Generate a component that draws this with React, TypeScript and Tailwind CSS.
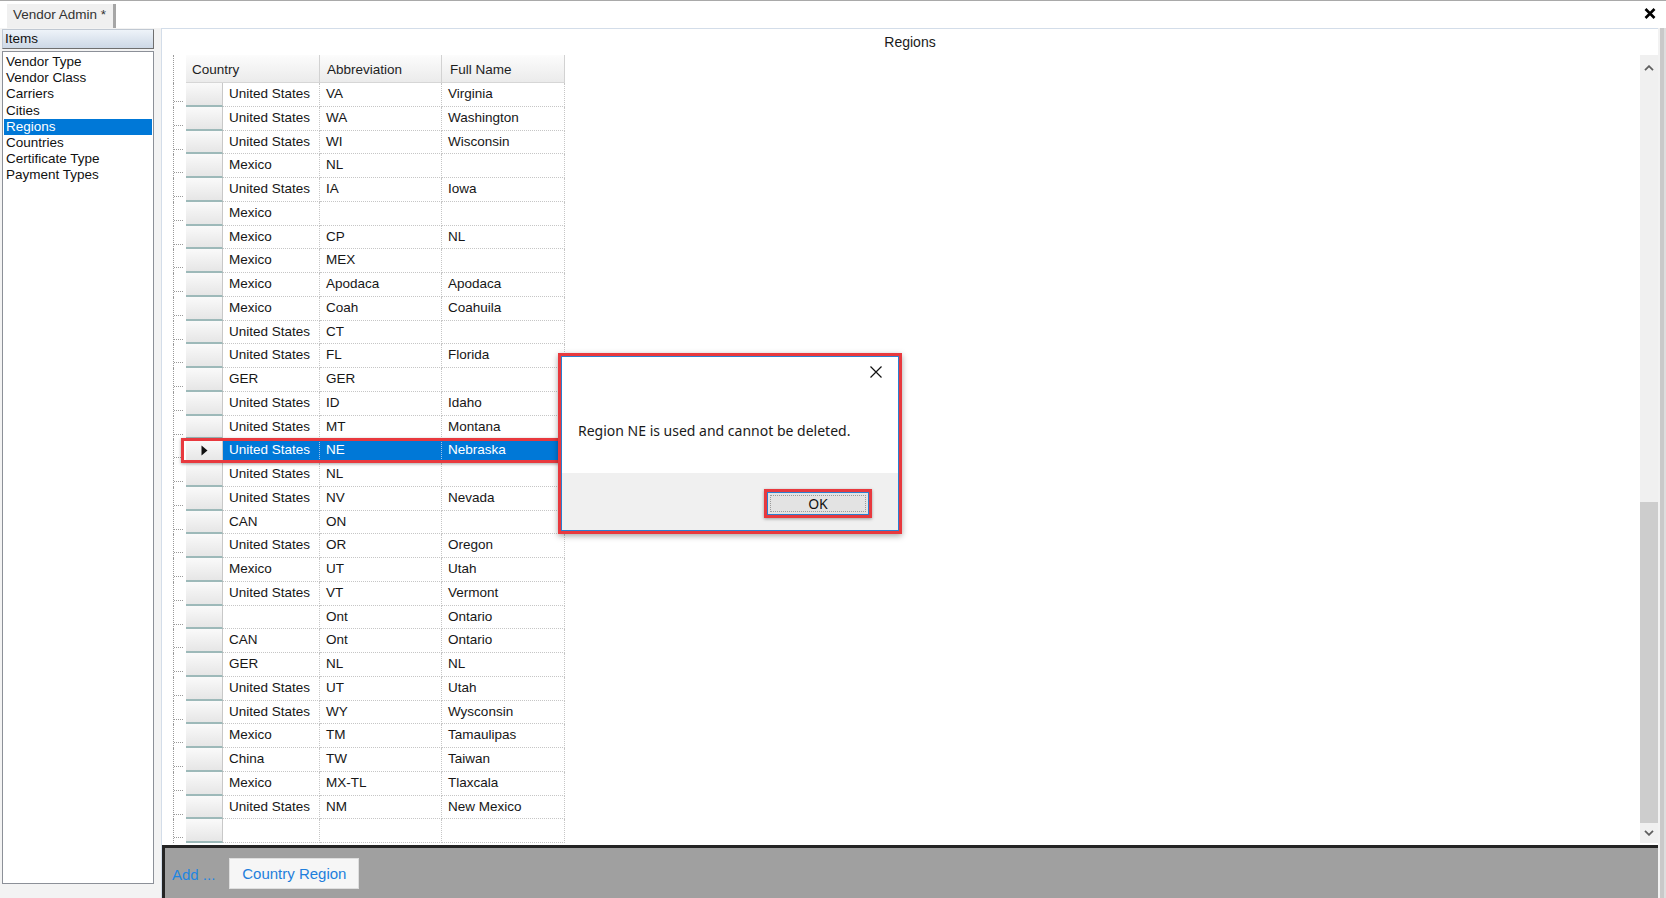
import React from "react";

type Region = [string, string, string];

const regions: Region[] = [
  ["United States", "VA", "Virginia"],
  ["United States", "WA", "Washington"],
  ["United States", "WI", "Wisconsin"],
  ["Mexico", "NL", ""],
  ["United States", "IA", "Iowa"],
  ["Mexico", "", ""],
  ["Mexico", "CP", "NL"],
  ["Mexico", "MEX", ""],
  ["Mexico", "Apodaca", "Apodaca"],
  ["Mexico", "Coah", "Coahuila"],
  ["United States", "CT", ""],
  ["United States", "FL", "Florida"],
  ["GER", "GER", ""],
  ["United States", "ID", "Idaho"],
  ["United States", "MT", "Montana"],
  ["United States", "NE", "Nebraska"],
  ["United States", "NL", ""],
  ["United States", "NV", "Nevada"],
  ["CAN", "ON", ""],
  ["United States", "OR", "Oregon"],
  ["Mexico", "UT", "Utah"],
  ["United States", "VT", "Vermont"],
  ["", "Ont", "Ontario"],
  ["CAN", "Ont", "Ontario"],
  ["GER", "NL", "NL"],
  ["United States", "UT", "Utah"],
  ["United States", "WY", "Wysconsin"],
  ["Mexico", "TM", "Tamaulipas"],
  ["China", "TW", "Taiwan"],
  ["Mexico", "MX-TL", "Tlaxcala"],
  ["United States", "NM", "New Mexico"],
];

const items = [
  "Vendor Type",
  "Vendor Class",
  "Carriers",
  "Cities",
  "Regions",
  "Countries",
  "Certificate Type",
  "Payment Types",
];

const SELECTED = 15;

const Chevron = ({ up }: { up?: boolean }) => (
  <svg width="10" height="6" viewBox="0 0 10 6">
    <polyline
      points={up ? "1,5.2 5,1.2 9,5.2" : "1,0.8 5,4.8 9,0.8"}
      fill="none"
      stroke="#5f5f5f"
      strokeWidth="1.8"
    />
  </svg>
);

function GridRow({ row, selected }: { row?: Region; selected?: boolean }) {
  const cell = selected
    ? "shrink-0 pl-[6px] pt-[2px] leading-[17px] border-r border-b border-dotted border-[#9cc4ee] bg-[#0078d7] text-white"
    : "shrink-0 pl-[6px] pt-[2px] leading-[17px] border-r border-b border-dotted border-[#c6c6c6] text-[#161616]";
  return (
    <div className="flex h-[23.75px]">
      <div className="w-[13px] shrink-0 border-l border-dotted border-[#9a9a9a] pt-[18px]">
        <div className="w-[9px] border-t border-dotted border-[#9a9a9a]" />
      </div>
      <div className="w-[37px] shrink-0 flex items-center justify-center bg-linear-to-b from-[#fafafa] to-[#e6e6e6] border-b-2 border-r border-b-[#9db9b9] border-r-[#c8c8c8]">
        {selected && (
          <svg width="7" height="11" viewBox="0 0 7 11">
            <polygon points="0.5,0.5 6.5,5.5 0.5,10.5" fill="#111" />
          </svg>
        )}
      </div>
      <div className={`w-[97px] ${cell}`}>{row?.[0]}</div>
      <div className={`w-[122px] ${cell}`}>{row?.[1]}</div>
      <div className={`w-[123px] ${cell}`}>{row?.[2]}</div>
    </div>
  );
}

export default function App() {
  return (
    <div className="relative w-[1666px] h-[898px] overflow-hidden bg-white flex flex-col font-['Liberation_Sans',Arial,sans-serif]">
      {/* tab strip */}
      <div className="h-[28px] shrink-0 border-t border-[#a9a9a9] flex items-end justify-between pl-[7px] pr-[10px]">
        <div className="h-[24px] w-[109px] bg-[#f0f0f0] border-r-[3px] border-[#a6a6a6] text-[13.5px] text-[#333] pl-[6px] pt-[3px] leading-[16px] whitespace-nowrap">
          Vendor Admin *
        </div>
        <svg width="12" height="11" viewBox="0 0 12 11" className="self-start mt-[7px]">
          <path d="M1.5 1 L10.5 10 M10.5 1 L1.5 10" stroke="#000" strokeWidth="2.6" />
        </svg>
      </div>

      <div className="flex flex-1 min-h-0">
        {/* left items panel */}
        <div className="w-[161px] shrink-0 bg-[#f3f3f3] flex flex-col">
          <div className="mt-[1px] ml-[2px] w-[152px] h-[20px] bg-linear-to-b from-[#eef3f9] to-[#cdd8e6] border border-t-[#c0c8d2] border-l-[#c0c8d2] border-r-[#6f6f6f] border-b-[#6f6f6f] text-[13.5px] text-[#111] pl-[2px] leading-[17px]">
            Items
          </div>
          <div className="mt-[2px] ml-[2px] w-[152px] h-[833px] bg-white border border-[#8c9098] pt-[2px] px-[1px]">
            {items.map((it) =>
              it === "Regions" ? (
                <div key={it} className="h-[16.2px] leading-[16px] text-[13.5px] pl-[2px] bg-[#0078d7] text-white">
                  {it}
                </div>
              ) : (
                <div key={it} className="h-[16.2px] leading-[16px] text-[13.5px] pl-[2px] text-[#111]">
                  {it}
                </div>
              )
            )}
          </div>
        </div>

        {/* main panel */}
        <div className="flex-1 min-w-0 flex flex-col border-l border-t border-[#d3dde9]">
          <div className="flex-1 min-h-0 flex flex-col pt-[5px]">
            <div className="h-[17px] leading-[17px] text-center text-[14px] text-[#1a1a1a]">Regions</div>
            <div className="mt-[4px] h-[788px] flex">
              <div className="flex-1 pl-[11px] text-[13.5px]">
                {/* header */}
                <div className="flex h-[28px]">
                  <div className="w-[13px] shrink-0 border-l border-dotted border-[#9a9a9a]" />
                  <div className="w-[134px] shrink-0 bg-linear-to-b from-[#fcfcfc] to-[#ebebeb] border-r border-b border-r-[#d2d2d2] border-b-[#d6d6d6] pl-[6px] pt-[6px] leading-[17px] text-[#1e1e1e]">
                    Country
                  </div>
                  <div className="w-[122px] shrink-0 bg-linear-to-b from-[#fcfcfc] to-[#ebebeb] border-r border-b border-r-[#d2d2d2] border-b-[#d6d6d6] pl-[7px] pt-[6px] leading-[17px] text-[#1e1e1e]">
                    Abbreviation
                  </div>
                  <div className="w-[123px] shrink-0 bg-linear-to-b from-[#fcfcfc] to-[#ebebeb] border-r border-b border-r-[#d2d2d2] border-b-[#d6d6d6] pl-[8px] pt-[6px] leading-[17px] text-[#1e1e1e]">
                    Full Name
                  </div>
                </div>
                {regions.map((r, i) => (
                  <GridRow key={i} row={r} selected={i === SELECTED} />
                ))}
                <GridRow />
              </div>

              {/* vertical scrollbar */}
              <div className="w-[18px] shrink-0 flex flex-col bg-[#f0f0f0]">
                <div className="h-[25px] flex items-center justify-center">
                  <Chevron up />
                </div>
                <div className="h-[422px]" />
                <div className="h-[321px] bg-[#cdcdcd]" />
                <div className="h-[20px] flex items-center justify-center">
                  <Chevron />
                </div>
              </div>
            </div>
          </div>

          {/* bottom bar */}
          <div className="h-[53px] shrink-0 border-t-[3px] border-l-[3px] border-[#242424] bg-[#a0a0a0] flex items-center pl-[7px] gap-[14px] text-[15px]">
            <span className="text-[#1f86e0] pt-[4px]">Add ...</span>
            <div className="h-[31px] w-[130px] mt-[1px] bg-[#f6f6f6] border border-[#dedede] flex items-center justify-center pt-[2px] text-[#1f7fdc]">
              Country Region
            </div>
          </div>
        </div>

        {/* right window edge */}
        <div className="w-[8px] shrink-0 bg-[#c9c9c9] border-l-2 border-l-[#f2f2f2] border-r-2 border-r-[#dedede]" />
      </div>

      {/* highlight on selected row */}
      <div className="absolute left-[181px] top-[438px] w-[381px] h-[25px] border-[3px] border-[#e8393e] shadow-[0_1px_3px_rgba(0,0,0,0.35)]" />

      {/* message box */}
      <div className="absolute left-[558px] top-[353px] w-[344px] h-[181px] border-[3px] border-[#e8393e] shadow-[0_2px_6px_rgba(0,0,0,0.35)]">
        <div className="h-full border border-[#2b7fd0] flex flex-col">
          <div className="relative h-[116px] bg-white">
            <svg width="12" height="12" viewBox="0 0 12 12" className="absolute left-[308px] top-[9px]">
              <path d="M0.5 0.5 L11.5 11.5 M11.5 0.5 L0.5 11.5" stroke="#111" strokeWidth="1.2" />
            </svg>
            <div className="absolute left-[16px] top-[65px] text-[14px] leading-[18px] text-[#1a1a1a] font-['Noto_Sans',sans-serif] whitespace-nowrap">
              Region NE is used and cannot be deleted.
            </div>
          </div>
          <div className="flex-1 bg-[#f0f0f0] flex justify-end items-start pt-[16px] pr-[26px]">
            <div className="w-[108px] h-[29px] border-[3px] border-[#e8393e] shadow-[0_1px_3px_rgba(0,0,0,0.35)]">
              <div className="h-full bg-[#e3e3e3] border border-[#2b7fd0] p-[2px]">
                <div className="h-full border border-dotted border-[#9a9a9a] flex items-center justify-center text-[14px] text-[#111] font-['Noto_Sans',sans-serif]">
                  OK
                </div>
              </div>
            </div>
          </div>
        </div>
      </div>
    </div>
  );
}
